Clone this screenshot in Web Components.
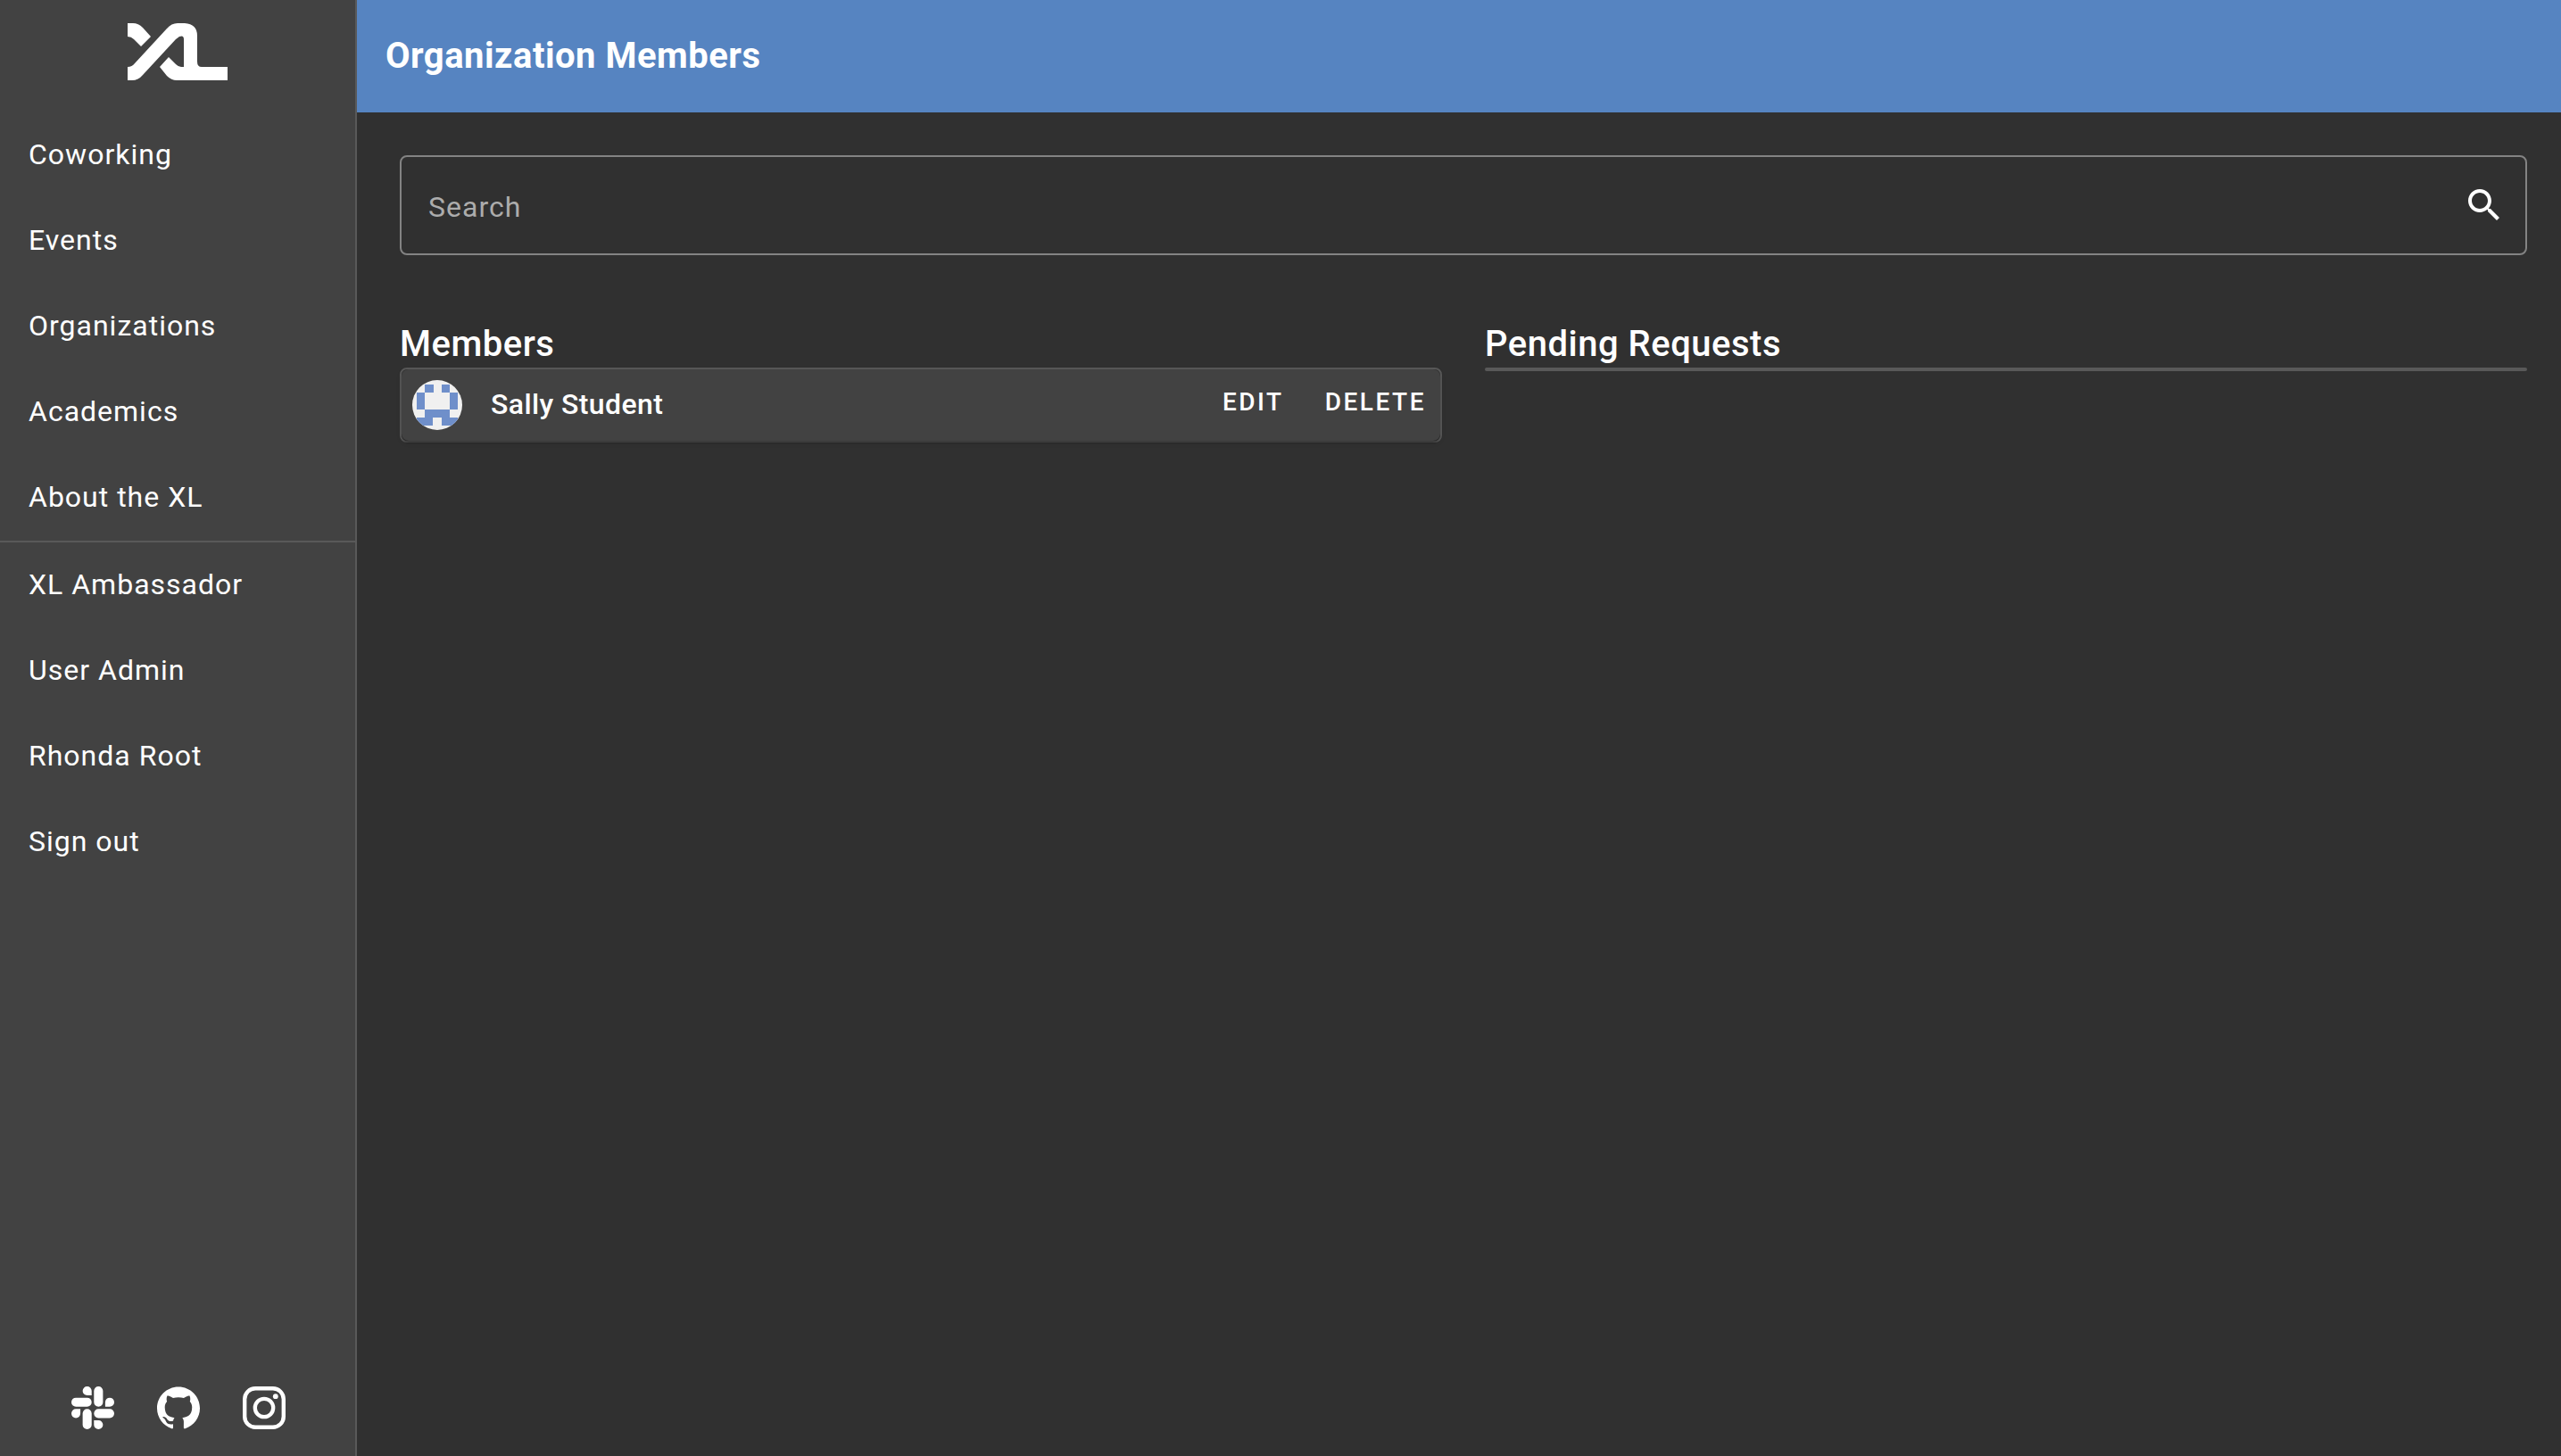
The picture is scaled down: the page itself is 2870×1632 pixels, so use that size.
<!DOCTYPE html>
<html lang="en">
<head>
<meta charset="utf-8">
<title>Organization Members</title>
<style>
  html, body { height: 100%; margin: 0; }
  body {
    --surface: #424242;
    --background: #303030;
    --outline: #595959;
    --primary: #5684c1;
    --heading-tracking: 0.0125em;
    --button-tracking: 0.09em;
    background: var(--background);
    color: #fff;
    font: 400 32px/48px Roboto, sans-serif;
    letter-spacing: 1px;
  }
</style>
</head>
<body>
<xl-app></xl-app>
<script>
const define = (name, html, ready) => {
  const template = document.createElement('template');
  template.innerHTML = html;
  customElements.define(name, class extends HTMLElement {
    constructor() {
      super();
      this.attachShadow({ mode: 'open' }).append(template.content.cloneNode(true));
    }
    connectedCallback() { if (ready) ready(this, this.shadowRoot); }
  });
};

define('xl-logo', `
<style>
  :host { display: block; }
  a { display: flex; justify-content: center; padding: 26px 0 36px; }
  svg { width: 112px; height: 64px; fill: #fff; }
</style>
<a href="#" aria-label="XL home">
<svg viewBox="0 0 112 64">
  <path d="M0 0H6Q12 0 17 5L26 15L15 26L7 18Q4 15 0 15Z"/>
  <path d="M0 49Q5 49 8 45L44 6Q49 0 56 0H64Q78 1 78 14V43Q78 49 83 49H112V64H55Q49 64 44 59L36 49L46 38L54 46Q57 49 60 49H63V18Q63 13 58 15L54 18L17 58Q12 64 5 64H0Z"/>
</svg></a>`);

define('xl-nav-item', `
<style>
  :host { display: block; }
  a { display: flex; align-items: center; box-sizing: border-box; height: 96px; padding: 0 32px 2px; color: inherit; text-decoration: none; }
</style>
<a href="#"><slot></slot></a>`);

define('xl-social', `
<style>
  :host { display: flex; gap: 48px; padding: 24px 80px 30px; }
  a { display: flex; }
  svg { width: 48px; height: 48px; fill: #fff; }
</style>
<a href="#" aria-label="Slack"><svg viewBox="0 0 24 24"><path d="M5.042 15.165a2.528 2.528 0 0 1-2.52 2.523A2.528 2.528 0 0 1 0 15.165a2.527 2.527 0 0 1 2.522-2.52h2.52v2.52zM6.313 15.165a2.527 2.527 0 0 1 2.521-2.52 2.527 2.527 0 0 1 2.521 2.52v6.313A2.528 2.528 0 0 1 8.834 24a2.528 2.528 0 0 1-2.521-2.522v-6.313zM8.834 5.042a2.528 2.528 0 0 1-2.521-2.52A2.528 2.528 0 0 1 8.834 0a2.528 2.528 0 0 1 2.521 2.522v2.52H8.834zM8.834 6.313a2.528 2.528 0 0 1 2.521 2.521 2.528 2.528 0 0 1-2.521 2.521H2.522A2.528 2.528 0 0 1 0 8.834a2.528 2.528 0 0 1 2.522-2.521h6.312zM18.956 8.834a2.528 2.528 0 0 1 2.522-2.521A2.528 2.528 0 0 1 24 8.834a2.528 2.528 0 0 1-2.522 2.521h-2.522V8.834zM17.688 8.834a2.528 2.528 0 0 1-2.523 2.521 2.527 2.527 0 0 1-2.52-2.521V2.522A2.527 2.527 0 0 1 15.165 0a2.528 2.528 0 0 1 2.523 2.522v6.312zM15.165 18.956a2.528 2.528 0 0 1 2.523 2.522A2.528 2.528 0 0 1 15.165 24a2.527 2.527 0 0 1-2.52-2.522v-2.522h2.52zM15.165 17.688a2.527 2.527 0 0 1-2.52-2.523 2.526 2.526 0 0 1 2.52-2.52h6.313A2.527 2.527 0 0 1 24 15.165a2.528 2.528 0 0 1-2.522 2.523h-6.313z"/></svg></a>
<a href="#" aria-label="GitHub"><svg viewBox="0 0 24 24"><path d="M12 .297c-6.63 0-12 5.373-12 12 0 5.303 3.438 9.8 8.205 11.385.6.113.82-.258.82-.577 0-.285-.01-1.04-.015-2.04-3.338.724-4.042-1.61-4.042-1.61C4.422 18.07 3.633 17.7 3.633 17.7c-1.087-.744.084-.729.084-.729 1.205.084 1.838 1.236 1.838 1.236 1.07 1.835 2.809 1.305 3.495.998.108-.776.417-1.305.76-1.605-2.665-.3-5.466-1.332-5.466-5.93 0-1.31.465-2.38 1.235-3.22-.135-.303-.54-1.523.105-3.176 0 0 1.005-.322 3.3 1.23.96-.267 1.98-.399 3-.405 1.02.006 2.04.138 3 .405 2.28-1.552 3.285-1.23 3.285-1.23.645 1.653.24 2.873.12 3.176.765.84 1.23 1.91 1.23 3.22 0 4.61-2.805 5.625-5.475 5.92.42.36.81 1.096.81 2.22 0 1.606-.015 2.896-.015 3.286 0 .315.21.69.825.57C20.565 22.092 24 17.592 24 12.297c0-6.627-5.373-12-12-12"/></svg></a>
<a href="#" aria-label="Instagram"><svg viewBox="0 0 48 48"><rect x="2.2" y="2.2" width="43.6" height="43.6" rx="12" fill="none" stroke="#fff" stroke-width="4.4"/><circle cx="24" cy="24" r="10.2" fill="none" stroke="#fff" stroke-width="4.3"/><circle cx="36.8" cy="11.2" r="2.9"/></svg></a>`);

define('xl-sidebar', `
<style>
  :host { display: flex; flex-direction: column; box-sizing: border-box; background: var(--surface); border-right: 2px solid var(--outline); }
  nav { flex: 1; }
  hr { margin: 0; border: 0; border-top: 2px solid var(--outline); }
</style>
<xl-logo></xl-logo>
<nav>
  <xl-nav-item>Coworking</xl-nav-item>
  <xl-nav-item>Events</xl-nav-item>
  <xl-nav-item>Organizations</xl-nav-item>
  <xl-nav-item>Academics</xl-nav-item>
  <xl-nav-item>About the XL</xl-nav-item>
  <hr>
  <xl-nav-item>XL Ambassador</xl-nav-item>
  <xl-nav-item>User Admin</xl-nav-item>
  <xl-nav-item>Rhonda Root</xl-nav-item>
  <xl-nav-item>Sign out</xl-nav-item>
</nav>
<xl-social></xl-social>`);

define('xl-top-bar', `
<style>
  :host { display: flex; align-items: center; height: 126px; padding: 0 32px; background: var(--primary); }
  h1 { margin: 0; font-size: 40px; line-height: 64px; font-weight: 700; letter-spacing: var(--heading-tracking); }
</style>
<h1><slot></slot></h1>`);

define('xl-search', `
<style>
  :host { display: block; }
  form { display: flex; align-items: center; box-sizing: border-box; height: 112px; border: 2px solid #838383; border-radius: 8px; padding-right: 22px; }
  input { flex: 1; min-width: 0; height: 100%; box-sizing: border-box; padding: 4px 30px 0; border: 0; outline: 0; background: none; color: #fff; font: inherit; letter-spacing: inherit; }
  input::placeholder { color: #acacac; opacity: 1; }
  button { display: flex; padding: 0; border: 0; background: none; }
  svg { width: 48px; height: 48px; fill: #fff; }
</style>
<form role="search">
  <input type="text" placeholder="Search" aria-label="Search">
  <button type="button" aria-label="Search"><svg viewBox="0 0 24 24"><path d="M15.5 14h-.79l-.28-.27C15.41 12.59 16 11.11 16 9.5 16 5.91 13.09 3 9.5 3S3 5.91 3 9.5 5.91 16 9.5 16c1.61 0 3.09-.59 4.23-1.57l.27.28v.79l5 4.99L20.49 19l-4.99-5zm-6 0C7.01 14 5 11.99 5 9.5S7.01 5 9.5 5 14 7.01 14 9.5 11.99 14 9.5 14z"/></svg></button>
</form>`);

define('xl-member-list', `
<style>
  :host { display: block; min-width: 0; }
  h2 { margin: 0; font-size: 40px; line-height: 52px; font-weight: 500; letter-spacing: var(--heading-tracking); }
  .list { border: 2px solid var(--outline); border-radius: 8px; }
</style>
<section><h2></h2><div class="list"><slot></slot></div></section>`,
(host, root) => { root.querySelector('h2').textContent = host.getAttribute('heading'); });

define('xl-avatar', `
<style>
  :host { display: block; width: 56px; height: 56px; border-radius: 50%; overflow: hidden; background: #f0f0f0; }
  svg { display: block; width: 56px; height: 56px; }
</style>
<svg viewBox="0 0 56 56" fill="#6f8fca" shape-rendering="crispEdges">
  <path d="M14 5h10v9H14zM33 5h9v9H33zM5 14h9v19H5zM42 14h9v19H42zM14 33h28v9H14zM5 42h18v9H5zM33 42h18v9H33z"/>
</svg>`);

define('xl-member', `
<style>
  :host { display: flex; align-items: center; height: 80px; padding-left: 12px; background: var(--surface); border-radius: 8px; box-shadow: 0 4px 2px -2px rgba(0,0,0,.2), 0 2px 2px rgba(0,0,0,.14), 0 2px 6px rgba(0,0,0,.12); }
  .name { flex: 1; padding: 0 0 2px 32px; font-weight: 500; letter-spacing: var(--heading-tracking); }
  .actions { display: flex; gap: 14px; padding-bottom: 6px; }
  button { height: 72px; padding: 0 16px; border: 0; background: none; color: #fff; font: 500 28px/72px Roboto, sans-serif; letter-spacing: var(--button-tracking); }
</style>
<xl-avatar></xl-avatar>
<span class="name"><slot></slot></span>
<div class="actions"><button type="button">EDIT</button><button type="button">DELETE</button></div>`);

define('xl-app', `
<style>
  :host { display: grid; grid-template-columns: 400px minmax(0, 1fr); min-height: 100vh; }
  .content { padding: 48px 38px 48px 48px; display: grid; gap: 74px; }
  .columns { display: grid; grid-template-columns: 1fr 1fr; gap: 48px; }
</style>
<xl-sidebar></xl-sidebar>
<main>
  <xl-top-bar>Organization Members</xl-top-bar>
  <div class="content">
    <xl-search></xl-search>
    <div class="columns">
      <xl-member-list heading="Members"><xl-member>Sally Student</xl-member></xl-member-list>
      <xl-member-list heading="Pending Requests"></xl-member-list>
    </div>
  </div>
</main>`);
</script>
</body>
</html>
